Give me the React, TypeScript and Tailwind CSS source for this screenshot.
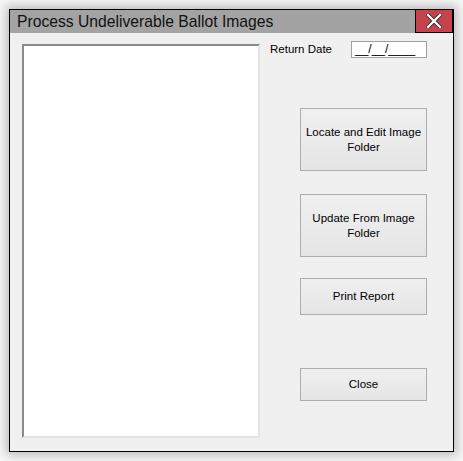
export default function App() {
  const buttonClass =
    "w-[127px] flex items-center justify-center text-center border border-[#adadad] bg-gradient-to-b from-[#f0f0f0] to-[#e5e5e5] text-[11.5px] leading-[15px] text-black px-1";

  return (
    <div
      className="w-[463px] h-[461px] bg-[#f7f7f7] pt-[9px] pl-[9px]"
      style={{ fontFamily: '"Liberation Sans", Arial, sans-serif' }}
    >
      <div className="w-[445px] h-[443px] border border-black bg-[#f0f0f0] flex flex-col shadow-[0_0_10px_3px_rgba(0,0,0,0.25)]">
        {/* Title bar */}
        <div className="h-[23px] flex items-stretch bg-[#a3a3a3]">
          <div className="flex-1 pl-[7px] flex items-center text-[15.7px] text-[#111]">
            Process Undeliverable Ballot Images
          </div>
          <div className="w-[38px] bg-[#c4434c] border border-black border-t-0 flex items-center justify-center">
            <svg width="16" height="14" viewBox="0 0 16 14">
              <path
                d="M2 1 L14 13 M14 1 L2 13"
                stroke="#333"
                strokeWidth="4"
                strokeLinecap="square"
              />
              <path
                d="M2 1 L14 13 M14 1 L2 13"
                stroke="#fff"
                strokeWidth="2.2"
                strokeLinecap="square"
              />
            </svg>
          </div>
        </div>

        {/* Body */}
        <div className="flex-1 flex">
          <div className="ml-[12px] mt-[11px] w-[238px] h-[394px] border-t-2 border-l-2 border-t-[#8a8a8a] border-l-[#8a8a8a] border-r-2 border-b-2 border-r-[#e3e3e3] border-b-[#e3e3e3] bg-white" />

          <div className="ml-[10px] w-[157px] flex flex-col">
            <div className="mt-[8px] flex items-center h-[17px]">
              <span className="text-[11.5px] text-black">Return Date</span>
              <div className="ml-auto w-[76px] h-[17px] border border-[#a0a0a0] bg-white text-[12px] leading-[14px] pl-[3px] text-black">
                __/__/____
              </div>
            </div>

            <div className="pl-[30px] flex flex-col">
              <button className={`${buttonClass} mt-[50px] h-[63px]`}>
                Locate and Edit Image Folder
              </button>
              <button className={`${buttonClass} mt-[23px] h-[63px]`}>
                Update From Image Folder
              </button>
              <button className={`${buttonClass} mt-[21px] h-[37px]`}>
                Print Report
              </button>
              <button className={`${buttonClass} mt-[53px] h-[33px]`}>
                Close
              </button>
            </div>
          </div>
        </div>
      </div>
    </div>
  );
}
